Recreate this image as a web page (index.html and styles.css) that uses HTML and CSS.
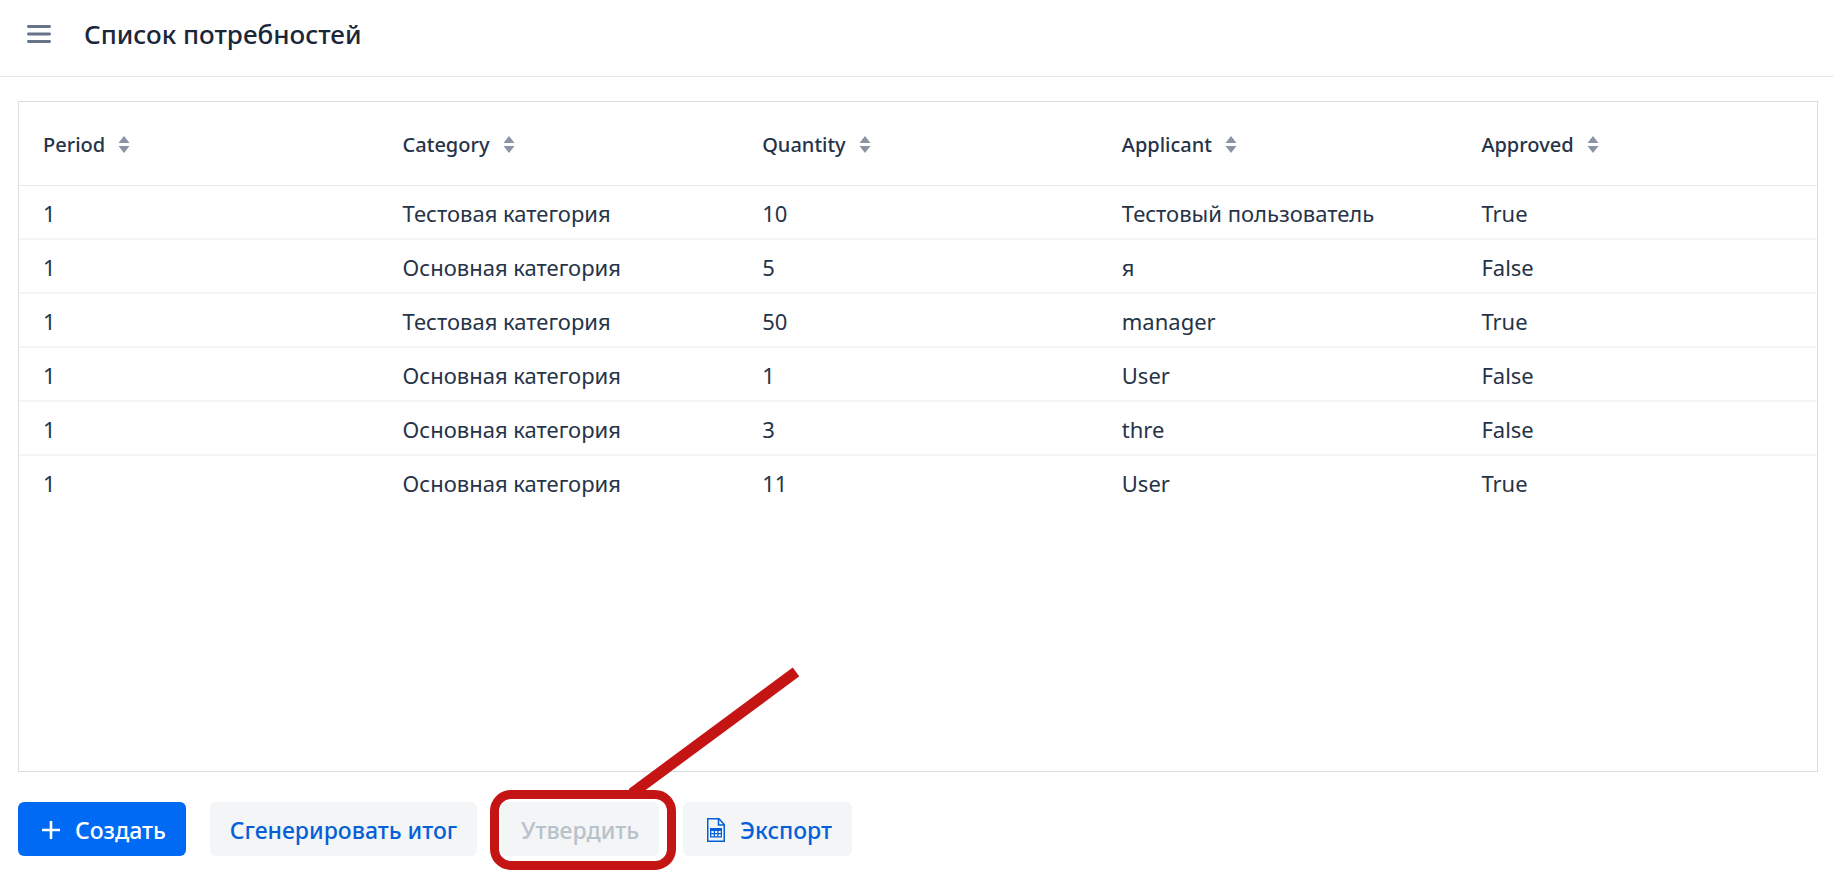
FILE: index.html
```html
<!DOCTYPE html>
<html lang="ru">
<head>
<meta charset="utf-8">
<meta name="viewport" content="width=device-width, initial-scale=1">
<title>Список потребностей</title>
<link rel="stylesheet" href="styles.css">
</head>
<body class="app">
<header class="navbar">
  <button class="menu-toggle" type="button" aria-label="Меню">
    <svg width="24" height="18" viewBox="0 0 24 18" fill="none" stroke="currentColor" stroke-width="2.800" stroke-linecap="round"><path d="M1.400 1.500h21.200M1.400 9h21.200M1.400 16.500h21.200"/></svg>
  </button>
  <h1 class="title">Список потребностей</h1>
</header>
<main class="content">
  <div class="grid">
    <table class="table">
      <thead>
        <tr>
          <th scope="col"><button class="sorter" type="button">Period <svg class="sort-icon" width="12" height="17" viewBox="0 0 12 17" fill="currentColor"><path d="M6 0l5.500 7H.5zM6 17L.5 10h11z"/></svg></button></th>
          <th scope="col"><button class="sorter" type="button">Category <svg class="sort-icon" width="12" height="17" viewBox="0 0 12 17" fill="currentColor"><path d="M6 0l5.500 7H.5zM6 17L.5 10h11z"/></svg></button></th>
          <th scope="col"><button class="sorter" type="button">Quantity <svg class="sort-icon" width="12" height="17" viewBox="0 0 12 17" fill="currentColor"><path d="M6 0l5.500 7H.5zM6 17L.5 10h11z"/></svg></button></th>
          <th scope="col"><button class="sorter" type="button">Applicant <svg class="sort-icon" width="12" height="17" viewBox="0 0 12 17" fill="currentColor"><path d="M6 0l5.500 7H.5zM6 17L.5 10h11z"/></svg></button></th>
          <th scope="col"><button class="sorter" type="button">Approved <svg class="sort-icon" width="12" height="17" viewBox="0 0 12 17" fill="currentColor"><path d="M6 0l5.500 7H.5zM6 17L.5 10h11z"/></svg></button></th>
        </tr>
      </thead>
      <tbody>
        <tr><td>1</td><td>Тестовая категория</td><td>10</td><td>Тестовый пользователь</td><td>True</td></tr>
        <tr><td>1</td><td>Основная категория</td><td>5</td><td>я</td><td>False</td></tr>
        <tr><td>1</td><td>Тестовая категория</td><td>50</td><td>manager</td><td>True</td></tr>
        <tr><td>1</td><td>Основная категория</td><td>1</td><td>User</td><td>False</td></tr>
        <tr><td>1</td><td>Основная категория</td><td>3</td><td>thre</td><td>False</td></tr>
        <tr><td>1</td><td>Основная категория</td><td>11</td><td>User</td><td>True</td></tr>
      </tbody>
    </table>
  </div>
  <div class="actions">
    <button class="btn btn-icon btn-primary" type="button">
      <svg width="18" height="18" viewBox="0 0 18 18" fill="none" stroke="currentColor" stroke-width="2.600"><path d="M0 9h18M9 0v18"/></svg>
      Создать
    </button>
    <button class="btn" type="button">Сгенерировать итог</button>
    <div class="callout">
      <button class="btn" type="button" disabled>Утвердить</button>
      <svg class="callout-line" width="170" height="130" viewBox="0 0 170 130" fill="none" stroke="currentColor" stroke-width="11"><path d="M2 127L167 5"/></svg>
    </div>
    <button class="btn btn-icon" type="button">
      <svg width="18" height="24" viewBox="0 0 18 24" fill="none" stroke="currentColor" stroke-width="1.500"><path d="M.75.75H12L17.250 6.500V23.250H.75zM11.500.75V7h5.750"/><path fill="currentColor" stroke="none" fill-rule="evenodd" d="M3 10h12v9.500H3zM4.300 13v2h2.500v-2zM8 13v2h2.300v-2zM11.500 13v2h2.300v-2zM4.300 16.200v2h2.500v-2zM8 16.200v2h2.300v-2zM11.500 16.200v2h2.300v-2z"/></svg>
      Экспорт
    </button>
  </div>
</main>
</body>
</html>
```
FILE: styles.css
```css
*, *::before, *::after { box-sizing: border-box; }

.app {
  display: flex;
  flex-direction: column;
  min-height: 100vh;
  margin: 0;
  background: #fff;
  color: #263348;
  font-family: "Segoe UI", "Noto Sans", "Open Sans", sans-serif;
  font-size: 22px;
  line-height: 32px;
}

button { font: inherit; color: inherit; cursor: pointer; }
svg { display: block; flex: none; }

.navbar {
  display: flex;
  align-items: center;
  gap: 30px;
  padding: 17px 24px 25px;
  border-bottom: 1px solid #e6e9ed;
}

.menu-toggle {
  display: flex;
  align-items: center;
  padding: 3px;
  border: 0;
  background: none;
  color: #667388;
}

.title {
  margin: 0;
  color: #1a2639;
  font-size: 26px;
  font-weight: 500;
  line-height: 34px;
}

.content {
  display: flex;
  flex: 1;
  flex-direction: column;
  gap: 30px;
  padding: 24px 16px 16px 18px;
}

.grid { flex: 1; border: 1px solid #dadee2; }

.table {
  width: 100%;
  border-collapse: separate;
  border-spacing: 0;
  table-layout: fixed;
}

.table th {
  height: 84px;
  padding: 2px 24px 0;
  border-bottom: 1px solid #e8eaec;
  text-align: left;
}

.table td { height: 54px; padding: 2px 24px 0; border-bottom: 2px solid #f4f5f6; }
.table tbody tr:last-child td { border-bottom-color: transparent; }

.sorter {
  display: flex;
  align-items: center;
  gap: 13px;
  padding: 0;
  border: 0;
  background: none;
  font-size: 20px;
  font-weight: 500;
}

.sort-icon { color: #8a94a3; }

.actions { display: flex; gap: 24px; }

.btn {
  display: flex;
  align-items: center;
  gap: 15px;
  height: 54px;
  padding: 2px 20px 0;
  border: 0;
  border-radius: 6px;
  background: #f3f5f7;
  color: #0560d8;
  font-size: 23px;
  font-weight: 500;
  white-space: nowrap;
}

.btn-icon { padding-left: 24px; }
.btn-primary { background: #006af5; color: #fff; }
.btn:disabled { color: #b9c1cb; cursor: default; }

.callout { position: relative; color: #c41414; }

.callout::after {
  position: absolute;
  inset: -12px -17px -14px -11px;
  border: 9px solid currentColor;
  border-radius: 21px;
  content: "";
  pointer-events: none;
}

.callout-line {
  position: absolute;
  bottom: 59px;
  left: 128px;
  pointer-events: none;
}
```
